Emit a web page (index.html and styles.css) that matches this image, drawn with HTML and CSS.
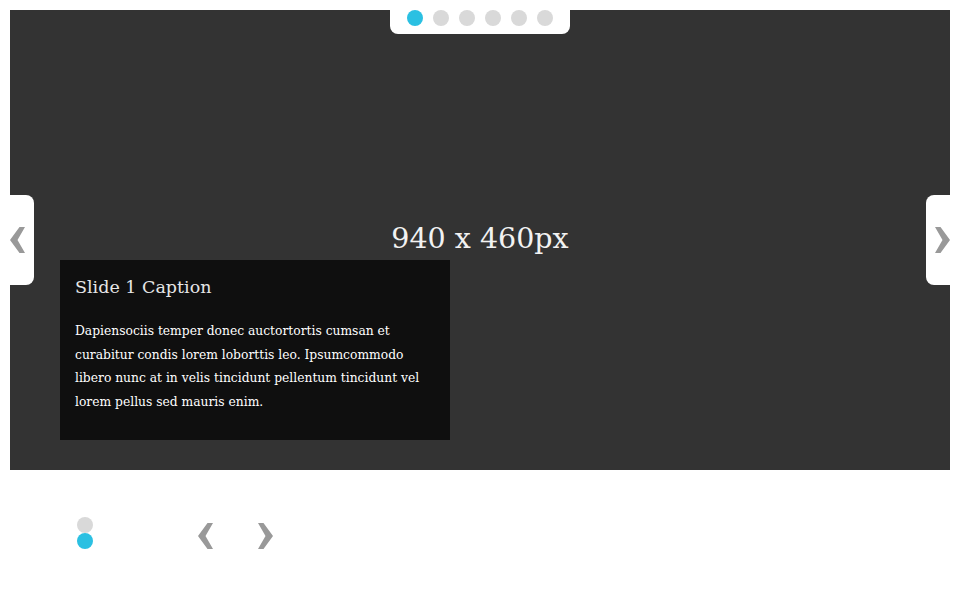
FILE: index.html
```html
<!DOCTYPE html>
<html>
<head>
<meta charset="utf-8">
<link rel="stylesheet" href="styles.css">
</head>
<body>
<div class="page">
  <div class="slider">
    <div class="pager">
      <span class="dot active"></span>
      <span class="dot"></span>
      <span class="dot"></span>
      <span class="dot"></span>
      <span class="dot"></span>
      <span class="dot"></span>
    </div>
    <div class="tab tab-prev">
      <svg class="chev" viewBox="0 0 15 28" width="15" height="28"><polygon points="15,1 9.5,1 0,14 9.5,27 15,27 7.5,14" fill="#999"/></svg>
    </div>
    <div class="tab tab-next">
      <svg class="chev" viewBox="0 0 15 28" width="15" height="28"><polygon points="0,1 5.5,1 15,14 5.5,27 0,27 7.5,14" fill="#999"/></svg>
    </div>
    <div class="slide-label">940 x 460px</div>
    <div class="caption">
      <h2 class="caption-title">Slide 1 Caption</h2>
      <p class="caption-text">Dapiensociis temper donec auctortortis cumsan et curabitur condis lorem loborttis leo. Ipsumcommodo libero nunc at in velis tincidunt pellentum tincidunt vel lorem pellus sed mauris enim.</p>
    </div>
  </div>
  <div class="controls">
    <div class="vdots">
      <span class="dot"></span>
      <span class="dot active"></span>
    </div>
    <div class="arrows">
      <svg class="chev" viewBox="0 0 15 28" width="15" height="28"><polygon points="15,1 9.5,1 0,14 9.5,27 15,27 7.5,14" fill="#999"/></svg>
      <svg class="chev" viewBox="0 0 15 28" width="15" height="28"><polygon points="0,1 5.5,1 15,14 5.5,27 0,27 7.5,14" fill="#999"/></svg>
    </div>
  </div>
</div>
</body>
</html>
```
FILE: styles.css
```css
html, body {
  margin: 0;
  padding: 0;
  background: #fff;
}
.page {
  padding: 10px;
  font-family: "DejaVu Serif", "Liberation Serif", serif;
}
.slider {
  position: relative;
  width: 940px;
  height: 460px;
  background: #333333;
  display: flex;
  align-items: center;
  justify-content: center;
}
.slide-label {
  color: #f2f2f2;
  font-size: 28.5px;
  margin-top: -4px;
}
.pager {
  position: absolute;
  top: -10px;
  left: 380px;
  width: 180px;
  height: 34px;
  background: #fff;
  border-radius: 0 0 8px 8px;
  display: flex;
  justify-content: center;
  align-items: flex-start;
  gap: 10px;
  padding-top: 10px;
  box-sizing: border-box;
}
.dot {
  display: block;
  width: 16px;
  height: 16px;
  border-radius: 50%;
  background: #d9d9d9;
}
.dot.active {
  background: #2bc0e2;
}
.tab {
  position: absolute;
  top: 185px;
  width: 34px;
  height: 90px;
  background: #fff;
  display: flex;
  align-items: center;
  box-sizing: border-box;
}
.tab-prev {
  left: -10px;
  border-radius: 0 8px 8px 0;
  padding-left: 10px;
}
.tab-next {
  right: -10px;
  border-radius: 8px 0 0 8px;
  padding-left: 9px;
}
.chev {
  display: block;
}
.caption {
  position: absolute;
  left: 50px;
  top: 250px;
  width: 390px;
  height: 180px;
  background: #0f0f0f;
  box-sizing: border-box;
  padding: 16px 15px;
}
.caption-title {
  margin: 0;
  font-weight: normal;
  font-size: 17.5px;
  color: #e6e6e6;
  line-height: 22px;
}
.caption-text {
  margin: 22px 0 0;
  font-size: 12.3px;
  line-height: 23.6px;
  color: #fff;
}
.controls {
  display: flex;
  align-items: center;
  padding-left: 67px;
  margin-top: 46px;
}
.vdots {
  display: flex;
  flex-direction: column;
}
.arrows {
  display: flex;
  gap: 45px;
  margin-left: 105px;
  margin-top: 6px;
}
```
